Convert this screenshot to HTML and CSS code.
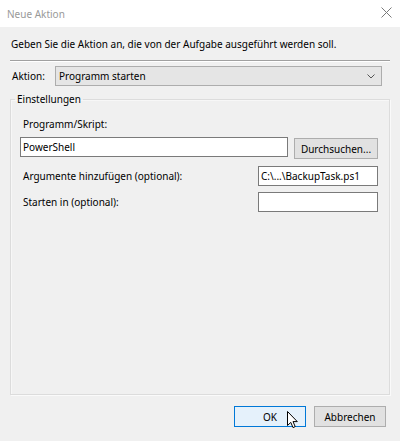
FILE: index.html
```html
<!DOCTYPE html>
<html lang="de">
<head>
<meta charset="utf-8">
<title>Neue Aktion</title>
<link rel="stylesheet" href="styles.css">
</head>
<body>
<div class="window">
  <div class="titlebar">
    <span class="title">Neue Aktion</span>
    <svg class="close" width="11" height="11" viewBox="0 0 11 11"><path d="M0.5 0.5 L10.5 10.5 M10.5 0.5 L0.5 10.5" stroke="#7a7a7a" stroke-width="1" fill="none"/></svg>
  </div>
  <div class="content">
    <p class="intro">Geben Sie die Aktion an, die von der Aufgabe ausgeführt werden soll.</p>
    <div class="sep"></div>
    <div class="action-row">
      <span class="action-label">Aktion:</span>
      <div class="combo">
        <span>Programm starten</span>
        <svg class="chev" width="8" height="5" viewBox="0 0 8 5"><path d="M0.5 0.5 L4 4 L7.5 0.5" stroke="#555" stroke-width="1" fill="none"/></svg>
      </div>
    </div>
    <fieldset class="group">
      <legend>Einstellungen</legend>
      <div class="group-body">
        <div class="field-label">Programm/Skript:</div>
        <div class="prog-row">
          <div class="textbox wide">PowerShell</div>
          <div class="btn browse">Durchsuchen...</div>
        </div>
        <div class="opt-row">
          <span class="opt-label">Argumente hinzufügen (optional):</span>
          <div class="textbox small">C:\...\BackupTask.ps1</div>
        </div>
        <div class="opt-row second">
          <span class="opt-label">Starten in (optional):</span>
          <div class="textbox small"></div>
        </div>
      </div>
    </fieldset>
    <div class="buttons">
      <div class="btn ok">OK</div>
      <div class="btn cancel">Abbrechen</div>
      <svg class="cursor" width="12" height="18" viewBox="0 0 12 18"><path d="M0.5 0.5 L0.5 14.5 L3.8 11.4 L6 16.6 L8.2 15.6 L6 10.6 L10.3 10.6 Z" fill="#fff" stroke="#000" stroke-width="1" stroke-linejoin="miter"/></svg>
    </div>
  </div>
</div>
</body>
</html>
```

FILE: styles.css
```css
* { box-sizing: border-box; }
html, body { margin: 0; padding: 0; }
body {
  width: 400px;
  height: 441px;
  font-family: "Noto Sans", "Open Sans", sans-serif;
  font-size: 10px;
  line-height: 16px;
  color: #000;
  background: #f0f0f0;
  overflow: hidden;
}
.window {
  height: 441px;
  display: flex;
  flex-direction: column;
}
.titlebar {
  height: 27px;
  background: #fff;
  display: flex;
  align-items: center;
  justify-content: space-between;
  padding: 0 8px 0 7px;
  flex: none;
}
.title { color: #999; font-size: 10px; }
.close { margin-top: -3px; }
.content {
  flex: 1;
  display: flex;
  flex-direction: column;
  padding: 9px 0 14px 0;
}
.intro {
  margin: 0 0 0 11px;
}
.sep {
  margin: 8px 10px 0 10px;
  height: 2px;
  border-top: 1px solid #a0a0a0;
  border-bottom: 1px solid #fff;
}
.action-row {
  display: flex;
  align-items: center;
  margin: 4px 0 0 12px;
}
.action-label { width: 43px; }
.combo {
  width: 327px;
  height: 20px;
  background: #e5e5e5;
  border: 1px solid #adadad;
  display: flex;
  align-items: center;
  justify-content: space-between;
  padding: 0 6px 0 3px;
}
.chev { margin-top: 1px; }
.group {
  flex: 1;
  margin: 5px 10px 0 10px;
  padding: 0;
  border: 1px solid #dcdcdc;
  box-shadow: inset 1px 1px 0 #f7f7f7, 1px 1px 0 #fafafa;
  min-width: 0;
}
.group legend {
  margin-left: 4px;
  padding: 0 2px;
  line-height: 16px;
}
.group-body {
  padding: 9px 11px 0 9px;
}
.field-label { margin-left: 3px; }
.prog-row {
  display: flex;
  margin-top: 5px;
  gap: 6px;
}
.textbox {
  height: 20px;
  background: #fff;
  border: 1px solid #7a7a7a;
  padding: 0 2px;
  line-height: 18px;
  white-space: nowrap;
  overflow: hidden;
}
.textbox.wide { width: 268px; }
.textbox.small { width: 120px; }
.btn {
  height: 21px;
  background: #e1e1e1;
  border: 1px solid #adadad;
  display: flex;
  align-items: center;
  justify-content: center;
}
.browse { width: 84px; margin-top: 1px; }
.opt-row {
  display: flex;
  align-items: center;
  justify-content: space-between;
  margin-top: 7px;
}
.opt-row.second { margin-top: 6px; }
.opt-label { margin-left: 3px; }
.buttons {
  display: flex;
  justify-content: flex-end;
  gap: 8px;
  margin: 11px 14px 0 0;
  position: relative;
}
.ok {
  width: 72px;
  background: #e5f1fb;
  border-color: #0078d7;
}
.cancel { width: 72px; }
.cursor {
  position: absolute;
  left: 287px;
  top: 5px;
}
```
